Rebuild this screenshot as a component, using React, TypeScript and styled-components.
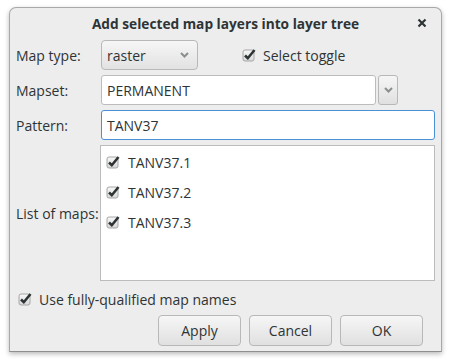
import styled, { createGlobalStyle } from "styled-components";

const GlobalStyle = createGlobalStyle`
  html, body {
    margin: 0;
    padding: 0;
    background: #ffffff;
  }
  body {
    font-family: "Open Sans", "Noto Sans", sans-serif;
    font-size: 14px;
    color: #2e3436;
  }
`;

const Page = styled.div`
  padding: 7px 0 0 9px;
  width: 451px;
  height: 362px;
  box-sizing: border-box;
`;

const Dialog = styled.div`
  width: 433px;
  height: 345px;
  box-sizing: border-box;
  background: #ededed;
  border: 1px solid #a8a8a8;
  border-bottom-color: #8f8f8f;
  border-radius: 7px 7px 0 0;
  box-shadow: 0 2px 5px rgba(0, 0, 0, 0.28);
  display: flex;
  flex-direction: column;
  padding: 0 6px 5px 6px;
`;

const Header = styled.div`
  height: 28px;
  display: flex;
  align-items: center;
  justify-content: center;
  position: relative;
  padding-top: 1px;
`;

const Title = styled.div`
  font-weight: bold;
  font-size: 13.7px;
  color: #2e3436;
`;

const Close = styled.div`
  position: absolute;
  right: 8px;
  top: 10px;
  width: 10px;
  height: 10px;
  display: flex;
`;

const Form = styled.div`
  margin-top: 3px;
  display: grid;
  grid-template-columns: 85px 1fr;
  grid-template-rows: 30px 30px 30px 136px;
  row-gap: 5px;
`;

const Label = styled.div`
  display: flex;
  align-items: center;
  white-space: nowrap;
`;

const Row = styled.div`
  display: flex;
  align-items: stretch;
  gap: 2px;
`;

const Combo = styled.div`
  width: 97px;
  box-sizing: border-box;
  border: 1px solid #b8b8b8;
  border-radius: 4px;
  background: linear-gradient(#f6f6f6, #e2e2e2);
  display: flex;
  align-items: center;
  justify-content: space-between;
  padding: 0 8px 0 5px;
`;

const ToggleWrap = styled.div`
  margin-left: 42px;
  display: flex;
  align-items: center;
  gap: 7px;
`;

const Entry = styled.div<{ $focused?: boolean; $width?: number }>`
  ${(p) => (p.$width ? `width: ${p.$width}px;` : "flex: 1;")}
  box-sizing: border-box;
  background: #ffffff;
  border: 1px solid ${(p) => (p.$focused ? "#4a90d9" : "#bcbcbc")};
  border-radius: 3px;
  display: flex;
  align-items: center;
  padding: 0 5px;
  color: #2e3436;
`;

const SmallButton = styled.div`
  width: 20px;
  box-sizing: border-box;
  border: 1px solid #b8b8b8;
  border-radius: 3px;
  background: linear-gradient(#f6f6f6, #e0e0e0);
  display: flex;
  align-items: center;
  justify-content: center;
`;

const ListBox = styled.div`
  box-sizing: border-box;
  background: #ffffff;
  border: 1px solid #bcbcbc;
  margin-left: -1px;
  padding: 1px 0 0 5px;
  display: flex;
  flex-direction: column;
`;

const ListItem = styled.div`
  height: 30px;
  display: flex;
  align-items: center;
  gap: 8px;
`;

const CheckRow = styled.div`
  margin-top: 8px;
  height: 20px;
  display: flex;
  align-items: center;
  gap: 7px;
  padding-left: 2px;
`;

const ButtonBar = styled.div`
  margin-top: 6px;
  display: flex;
  justify-content: flex-end;
  gap: 8px;
  padding-right: 12px;
`;

const Button = styled.div`
  width: 83px;
  height: 31px;
  box-sizing: border-box;
  border: 1px solid #b8b8b8;
  border-radius: 4px;
  background: linear-gradient(#f6f6f6, #e0e0e0);
  display: flex;
  align-items: center;
  justify-content: center;
  color: #2e3436;
`;

function Chevron() {
  return (
    <svg width="9" height="6" viewBox="0 0 9 6">
      <path d="M1 1 L4.5 4.5 L8 1" fill="none" stroke="#8b8e8f" strokeWidth="2" />
    </svg>
  );
}

function Check() {
  return (
    <svg width="14" height="14" viewBox="0 0 14 14" style={{ flexShrink: 0 }}>
      <defs>
        <linearGradient id="cbg" x1="0" y1="0" x2="0" y2="1">
          <stop offset="0" stopColor="#f8f8f8" />
          <stop offset="1" stopColor="#d8d8d8" />
        </linearGradient>
      </defs>
      <rect x="1" y="2" width="11" height="11" rx="2" fill="url(#cbg)" stroke="#a6a6a6" />
      <path d="M3 7.5 L5.8 10.2 L12.5 2" fill="none" stroke="#2e3436" strokeWidth="2.6" />
    </svg>
  );
}

const maps = ["TANV37.1", "TANV37.2", "TANV37.3"];

export default function App() {
  return (
    <>
      <GlobalStyle />
      <Page>
        <Dialog>
          <Header>
            <Title>Add selected map layers into layer tree</Title>
            <Close>
              <svg width="10" height="10" viewBox="0 0 10 10">
                <path d="M1.5 1.5 L8.5 8.5 M8.5 1.5 L1.5 8.5" stroke="#2e3436" strokeWidth="2.2" />
              </svg>
            </Close>
          </Header>
          <Form>
            <Label>Map type:</Label>
            <Row>
              <Combo>
                <span>raster</span>
                <Chevron />
              </Combo>
              <ToggleWrap>
                <Check />
                <span>Select toggle</span>
              </ToggleWrap>
            </Row>
            <Label>Mapset:</Label>
            <Row>
              <Entry $width={275}>PERMANENT</Entry>
              <SmallButton>
                <Chevron />
              </SmallButton>
            </Row>
            <Label>Pattern:</Label>
            <Row>
              <Entry $focused>TANV37</Entry>
            </Row>
            <Label>List of maps:</Label>
            <ListBox>
              {maps.map((m) => (
                <ListItem key={m}>
                  <Check />
                  <span>{m}</span>
                </ListItem>
              ))}
            </ListBox>
          </Form>
          <CheckRow>
            <Check />
            <span>Use fully-qualified map names</span>
          </CheckRow>
          <ButtonBar>
            <Button>Apply</Button>
            <Button>Cancel</Button>
            <Button>OK</Button>
          </ButtonBar>
        </Dialog>
      </Page>
    </>
  );
}
